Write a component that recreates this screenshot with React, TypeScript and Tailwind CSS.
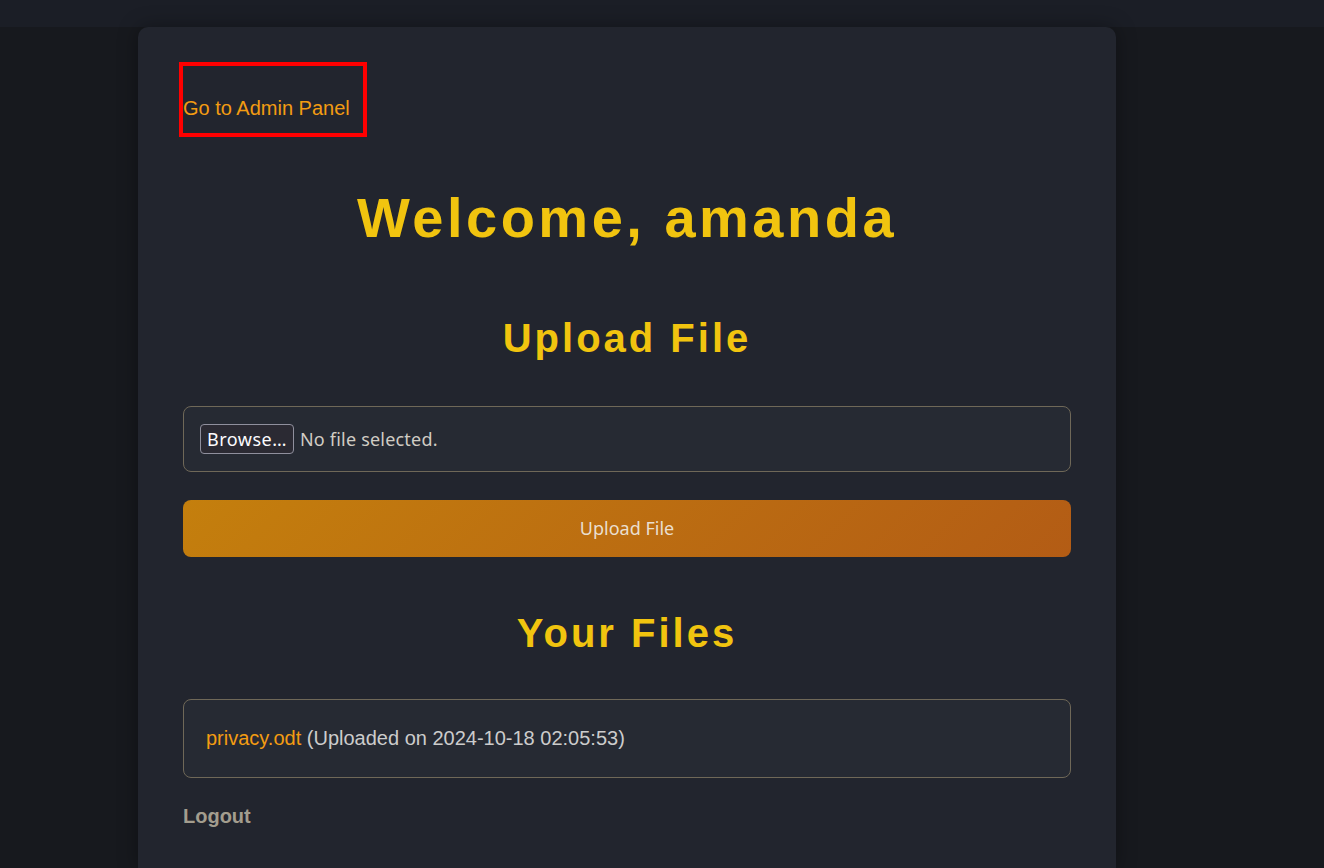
export default function App() {
  return (
    <div className="min-h-[868px] bg-[#17191e] font-['Liberation_Sans',Arial,sans-serif]">
      <div className="h-[27px] bg-[#1b1e26]" />
      <div className="flex">
        <div className="ml-[138px] w-[978px] rounded-t-[10px] bg-[#22252e] px-[45px] pt-[35px] pb-[40px] shadow-[0_0_20px_rgba(0,0,0,0.35)]">
          <div className="ml-[-4px] h-[75px] w-[188px] border-[4px] border-[#ff0000] pt-[31px]">
            <a className="block text-[20px] leading-[23px] text-[#f39c12]">Go to Admin Panel</a>
          </div>

          <h1 className="mt-[49px] text-center text-[56px] leading-[64px] font-bold tracking-[3.5px] text-[#f1c40f]">
            Welcome, amanda
          </h1>

          <h2 className="mt-[65px] text-center text-[40px] leading-[46px] font-bold tracking-[3px] text-[#f1c40f]">
            Upload File
          </h2>

          <div className="mt-[45px] flex h-[66px] items-center rounded-[8px] border border-[#6f6858] bg-[#262a33] px-[16px] font-['Noto_Sans',sans-serif] text-[18px]">
            <span className="flex h-[30px] items-center rounded-[4px] border border-[#8f8f9d] bg-[#2b2a33] px-[6px] tracking-[0.5px] text-[#fbfbfe]">
              Browse…
            </span>
            <span className="ml-[6px] tracking-[0.2px] text-[#d0ccc4]">No file selected.</span>
          </div>

          <button className="mt-[28px] flex h-[57px] w-full items-center justify-center rounded-[8px] bg-[linear-gradient(135deg,#c47f0d,#b35c15)] font-['Noto_Sans',sans-serif] text-[18px] text-[#eadfcf]">
            Upload File
          </button>

          <h2 className="mt-[53px] text-center text-[40px] leading-[46px] font-bold tracking-[3px] text-[#f1c40f]">
            Your Files
          </h2>

          <div className="mt-[43px] rounded-[8px] border border-[#6f6858] bg-[#262a33] px-[22px] py-[27px] text-[20px] leading-[23px]">
            <a className="text-[#f39c12]">privacy.odt</a>
            <span className="text-[#cccccc]"> (Uploaded on 2024-10-18 02:05:53)</span>
          </div>

          <div className="mt-[27px] text-[20px] leading-[23px] font-bold text-[#a39d8e]">Logout</div>
        </div>
      </div>
    </div>
  );
}
